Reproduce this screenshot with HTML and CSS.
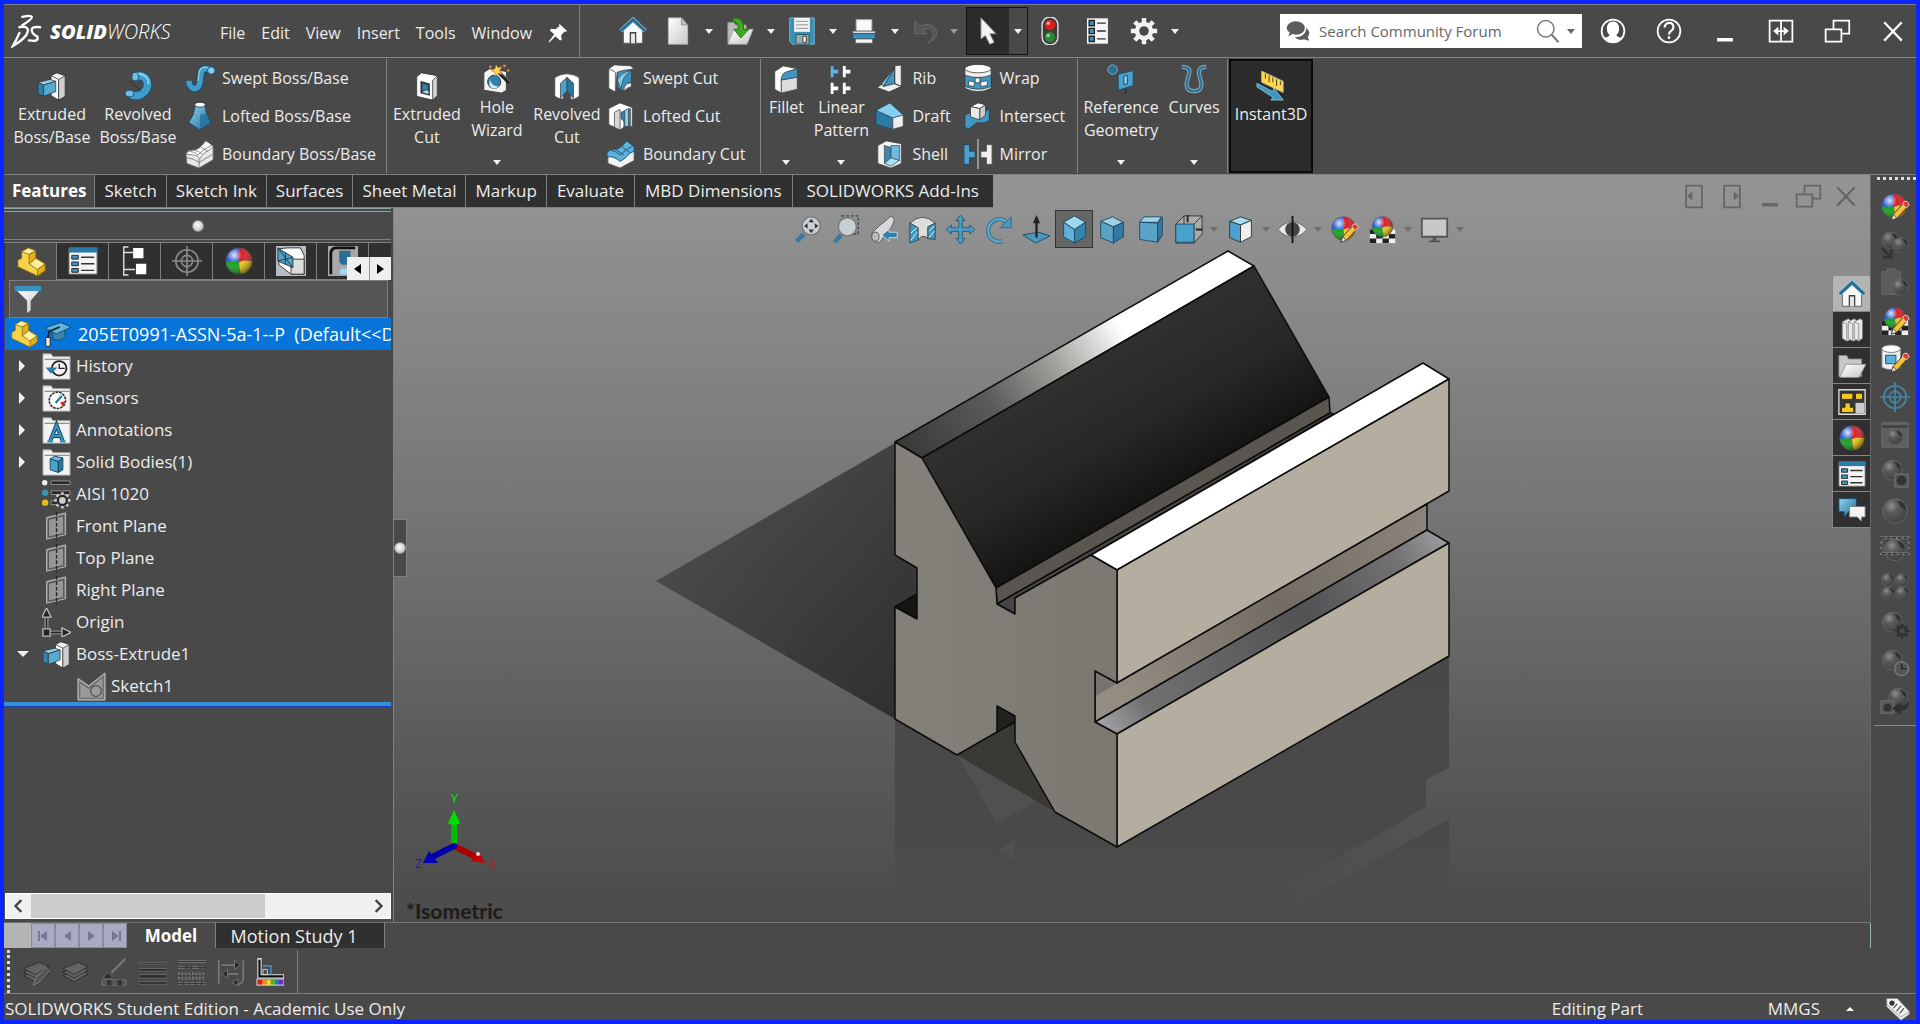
FILE: index.html
```html
<!DOCTYPE html>
<html lang="en">
<head>
<meta charset="utf-8">
<title>SOLIDWORKS - 205ET0991-ASSN-5a-1--P</title>
<link rel="stylesheet" href="styles.css">
</head>
<body>
<svg class="sprite" aria-hidden="true">
  <defs>
    <linearGradient id="gBlue" x1="0" y1="0" x2="1" y2="1"><stop offset="0" stop-color="#8fd0ee"/><stop offset="1" stop-color="#1f6c95"/></linearGradient>
    <linearGradient id="gWhite" x1="0" y1="0" x2="1" y2="1"><stop offset="0" stop-color="#fff"/><stop offset="1" stop-color="#c8c8c8"/></linearGradient>
    <radialGradient id="gShine" cx=".32" cy=".28" r=".75"><stop offset="0" stop-color="#fff" stop-opacity=".85"/><stop offset=".4" stop-color="#fff" stop-opacity="0"/><stop offset="1" stop-color="#000" stop-opacity=".45"/></radialGradient>
    <radialGradient id="gGrey" cx=".35" cy=".3" r=".75"><stop offset="0" stop-color="#909090"/><stop offset=".35" stop-color="#5c5c5c"/><stop offset="1" stop-color="#3e3e3e"/></radialGradient>
    <clipPath id="ballClip"><circle cx="16" cy="16" r="14"/></clipPath>
  </defs>
  <symbol id="ball" viewBox="0 0 32 32"><g clip-path="url(#ballClip)"><path fill="#2458d8" d="M0 0h17q-3 8-1 17L0 19z"/><path fill="#d8202a" d="M17 0h15v17q-9-3-16 0-2-9 1-17z"/><path fill="#18a020" d="M0 18q9-3 16-1 0 9 3 15H0z"/><path fill="#f0c818" d="M16 17q8-3 16 0v15H19q-3-7-3-15z"/></g><circle cx="16" cy="16" r="14" fill="url(#gShine)" stroke="#555" stroke-width=".7"/></symbol>
  <symbol id="greyball" viewBox="0 0 32 32"><circle cx="16" cy="16" r="13" fill="url(#gGrey)" stroke="#6a6a6a"/><path fill="#303030" d="M19 5q8 1 9 10-6-1-9-10z"/></symbol>
  <symbol id="pencil" viewBox="0 0 32 32"><path fill="#f4c23a" stroke="#4a3a20" d="M12 30l2-6 11-12 4 4-11 12z"/><path fill="#e03a2a" stroke="#ddd" d="M24 13l2-3q4-1 5 4l-3 3z"/><path fill="#eee" stroke="#444" d="M12 30l2-6 4 4z"/></symbol>
  <symbol id="cube" viewBox="0 0 32 32"><g stroke="#1b4a63" stroke-linejoin="round"><path fill="#9fd8f0" d="M16 1l12 7-12 8L4 8z"/><path fill="#5fb0d6" d="M4 8l12 8v15L4 24z"/><path fill="#3484ac" d="M28 8l-12 8v15l12-7z"/></g></symbol>
  <symbol id="cubedim" viewBox="0 0 32 32"><g stroke="#1b4a63" stroke-linejoin="round"><path fill="#9fd0e6" d="M3 7l13-5 12 6-11 5z"/><path fill="#5ba3c6" d="M3 7l14 6v18L3 25z"/><path fill="#34799e" d="M28 8l-11 5v18l11-7z"/></g></symbol>
  <symbol id="cubetri" viewBox="0 0 32 32"><g stroke="#1b4a63"><path fill="#9fd0e6" d="M4 8l5-6h19l-4 6z"/><path fill="#5ba3c6" d="M4 8l20 1v21L4 27z"/><path fill="#34799e" d="M24 9l5-7v20l-5 8z"/></g></symbol>
  <symbol id="extrude" viewBox="0 0 32 32"><g stroke="#333" stroke-width=".8" stroke-linejoin="round"><path fill="#f4f4f4" d="M15 5l6-3 9 3v22l-7 4-1-21z"/><path fill="#fff" d="M15 5l8 4v22l-8-5z"/><path fill="#cfcfcf" d="M23 9l7-4v22l-7 4z"/><path fill="#8ed0ee" d="M1 12l13-3 6 2-13 4z"/><path fill="#2f82ad" d="M1 12l6 3v12l-6-3z"/><path fill="#57aad2" d="M7 15l13-4v11L7 27z"/></g></symbol>
  <symbol id="revolve" viewBox="0 0 32 32"><path fill="none" stroke="#1b4f6e" stroke-width="10" d="M13 6c9-3 14 3 13 10S15 30 7 24"/><path fill="none" stroke="#3e9dca" stroke-width="8" d="M13 6c9-3 14 3 13 10S15 30 7 24"/><path fill="none" stroke="#8ed0ee" stroke-width="2" d="M13 4c9-3 15 4 14 10"/><ellipse cx="13" cy="6" rx="3.500" ry="4.500" fill="#70bfe3" stroke="#1b4f6e"/><ellipse cx="7" cy="24" rx="4.500" ry="3.500" fill="#70bfe3" stroke="#1b4f6e"/><path stroke="#222" stroke-dasharray="3 1" d="M7 11l13 11"/></symbol>
  <symbol id="sweep" viewBox="0 0 32 32"><path fill="none" stroke="#174a68" stroke-width="8" d="M4 19c1 11 11 11 12 1l1-8c1-8 6-6 11-5"/><path fill="none" stroke="#3f9cc8" stroke-width="6" d="M4 19c1 11 11 11 12 1l1-8c1-8 6-6 11-5"/><path fill="none" stroke="#86cbea" stroke-width="1.500" d="M14 19l1-9c1-6 5-6 11-5"/><circle cx="28" cy="8" r="4" fill="#80cbec" stroke="#174a68"/></symbol>
  <symbol id="loft" viewBox="0 0 32 32"><path fill="url(#gBlue)" stroke="#174a68" d="M11 4h10l2 10 5 9-12 8L4 23l5-9z"/><path fill="#1f6c95" d="M16 14h6l5 9-11 7z" opacity=".7"/><ellipse cx="16" cy="4" rx="5.500" ry="2.500" fill="#fff" stroke="#444"/></symbol>
  <symbol id="boundary" viewBox="0 0 32 32"><g stroke="#666" stroke-width=".8"><path fill="#e8e8e8" d="M1 16q3-5 8-4t13-10q2 2 8 6v14L15 31 2 26z"/><path fill="#fff" d="M1 16q4 1 8 1t7 4q3-6 6-7t8-6q-5-5-8-6-6 9-13 10-5-1-8 4z"/><path fill="none" d="M5 13q6 1 9 4 5-6 14-10M10 12q5 1 8 4M17 9q3 1 7 4M15 21v10M2 20q8 1 13 5l15-9"/></g></symbol>
  <symbol id="boundarycut" viewBox="0 0 32 32"><path fill="#f2f2f2" stroke="#555" d="M2 16l13 6 15-10v11L15 31 2 26z"/><g stroke="#174a68" stroke-width=".9"><path fill="#5bb2da" d="M1 15q3-5 8-4t13-9l8 6v5q-5 1-9 7l-6 4q-6-6-14-5z"/><path fill="none" d="M5 12q6 1 10 5 6-6 14-10M10 11l9 6M17 8l8 6"/></g></symbol>
  <symbol id="cutex" viewBox="0 0 32 32"><g stroke="#333" stroke-width=".8"><path fill="#fff" d="M5 6l5-4 17 3v21l-5 5-17-4z"/><path fill="#d2d2d2" d="M22 10l5-5v21l-5 5z"/><path fill="#2f82ad" d="M10 12l8 2v11l-8-2z" stroke-width="2"/><path fill="#a6dcf4" d="M10 23l5-3 3 1v4z"/></g></symbol>
  <symbol id="hole" viewBox="0 0 32 32"><path fill="#f4f4f4" stroke="#444" d="M2 9l6-4 18 3v20l-5 3-19-3z"/><circle cx="13" cy="19" r="7" fill="#2f82ad" stroke="#333"/><path fill="#cfeeff" d="M8 16q2 8 10 8-6 5-10-1z"/><path stroke="#222" stroke-width="4" d="M16 7l13 13"/><path stroke="#888" d="M17 6l13 13"/><path fill="#ffd84a" stroke="#d87818" stroke-width=".7" d="M15 1l2 3 4-1-2 4 2 4-4-1-3 3v-4l-4-2 4-2z"/><g fill="#f08428"><circle cx="9" cy="3" r="1.500"/><circle cx="24" cy="2" r="1.500"/><circle cx="28" cy="7" r="1.300"/></g></symbol>
  <symbol id="cutrev" viewBox="0 0 32 32"><g stroke="#444" stroke-width=".8"><path fill="#fff" d="M3 7q13-8 26 0v20q-5 4-9 3V11l-4-4-4 5v18q-5 0-9-3z"/><path fill="#4ba3cd" d="M16 7l-7 6v16l7-8z"/><path fill="#2a769f" d="M16 7l7 6v16l-7-8z"/></g></symbol>
  <symbol id="cutsweep" viewBox="0 0 32 32"><g stroke="#444" stroke-width=".8"><path fill="#f4f4f4" d="M3 6l6-4 17 1 4 3-18 4-2 21-7-4z"/><path fill="#fff" d="M3 6l7 4v21l-7-4z"/><path fill="#3a92be" d="M12 10q10-4 15-2v13q-6-2-8 9l-7-4z"/><path fill="#84ccec" d="M12 18q4-8 15-10-10 6-11 20z"/><path fill="#eee" d="M19 30q0-9 8-9v4q-4 1-8 5z"/></g></symbol>
  <symbol id="cutloft" viewBox="0 0 32 32"><g stroke="#444" stroke-width=".8"><path fill="#fff" d="M3 8l12-6 13 5v20l-9 1-4 3-12-6z"/><path fill="#d8d8d8" d="M9 12l6-3v22l-6-3z"/><path fill="#2f82ad" d="M16 12l10-4v19l-7 1q1-8-3-9z"/><path fill="#8ed0ee" d="M20 10l4-2v19h-4z"/></g></symbol>
  <symbol id="fillet" viewBox="0 0 32 32"><g stroke="#444" stroke-width=".8"><path fill="#fff" d="M4 8l9-6 15 3-12 4-5 7v15l-7-4z"/><path fill="#dcdcdc" d="M11 17l17-3v13l-17 4z"/><path fill="#3f98c4" d="M11 17q0-8 7-9l10-3v9z"/></g></symbol>
  <symbol id="linpat" viewBox="0 0 32 32"><path fill="#5db4dc" d="M5 2h3v4h5v4H8v4H5z"/><path fill="#fff" d="M18 2h3v4h5v4h-5v4h-3zM5 20h3v4h5v4H8v4H5zM18 20h3v4h5v4h-5v4h-3z"/></symbol>
  <symbol id="rib" viewBox="0 0 32 32"><g stroke="#333" stroke-width=".8"><path fill="#eee" d="M21 3l7-1v23l-7-3zM2 26l8-5 11 1 7 3-13 6z"/><path fill="#3f98c4" d="M21 5v17l-12 3z"/><path fill="#7ac5e8" d="M21 5L7 22l2 3z"/></g></symbol>
  <symbol id="draft" viewBox="0 0 32 32"><g stroke="#1b4a63" stroke-width=".8"><path fill="#2d7aa5" d="M1 10l18 8v12L1 25z"/><path fill="#86cff0" d="M1 10L16 2l14 13-11 3z"/><path fill="#eee" stroke="#555" d="M19 18l11-3v12l-11 3z"/></g></symbol>
  <symbol id="shell" viewBox="0 0 32 32"><g stroke="#444" stroke-width=".8"><path fill="#f4f4f4" d="M3 7l9-5 16 3v21l-11 5-14-5z"/><path fill="#3789b4" d="M10 7l7 2v13l-7 4z"/><path fill="#6cbbe0" d="M17 7l9 0v16l-9-2z"/><path fill="#a8def6" d="M10 26l7-6 9 3-9 6z"/></g></symbol>
  <symbol id="wrap" viewBox="0 0 32 32"><g stroke="#333" stroke-width=".8"><path fill="#f0f0f0" d="M2 6v21q14 7 28 0V6z"/><path fill="#3f98c4" d="M2 13q14 5 28 0v12q-14 6-28 0z"/><ellipse cx="16" cy="6" rx="14" ry="4.500" fill="#fff"/><path fill="#fff" d="M6 19l6 1v5l-6-1zM19 20l7-1v5l-7 1zM13 16h5v5h-5z"/></g></symbol>
  <symbol id="intersect" viewBox="0 0 32 32"><g stroke="#333" stroke-width=".8"><path fill="#3f98c4" d="M2 15q8-5 13-2t13-5v13q-7 4-13 2l-9 7-4-2z"/><path fill="#fff" d="M8 6l8-4 8 2-6 4z"/><path fill="#e8e8e8" d="M8 6l10 2v12L8 17z"/><path fill="#ccc" d="M18 8l6-4v11l-6 5z"/></g></symbol>
  <symbol id="mirror" viewBox="0 0 32 32"><path fill="#4ba3cd" stroke="#1b4a63" d="M1 6h6v7h6v7H7v7H1z"/><path fill="#f2f2f2" stroke="#555" d="M31 6h-6v7h-6v7h6v7h6z"/><path stroke="#999" stroke-width="2" d="M16 0v32"/></symbol>
  <symbol id="refgeo" viewBox="0 0 32 32"><circle cx="7" cy="6" r="5" fill="#2f6f92" stroke="#7ab8d6"/><path fill="#4ba3cd" stroke="#1b4a63" d="M13 11l16-4v16l-16 5z"/><path fill="#7ecbea" stroke="#1b4a63" d="M19 13l4-1v9l-4 1z"/><path stroke="#222" d="M21 26v6"/></symbol>
  <symbol id="curves" viewBox="0 0 32 32"><path fill="none" stroke="#8ba8b5" stroke-width="4.500" d="M3 3q9 0 8 6l-3 12q0 8 8 8t8-8L21 9q0-6 8-6"/><path fill="none" stroke="#2c7399" stroke-width="2.500" d="M3 3q9 0 8 6l-3 12q0 8 8 8t8-8L21 9q0-6 8-6"/></symbol>
  <symbol id="instant" viewBox="0 0 32 32"><path fill="#ffd948" stroke="#aaa" d="M6 0l23 11v12L6 12z"/><path stroke="#333" d="M10 3v5M14 5v7M18 7v5M22 9v7M26 11v4"/><path fill="#3f98c4" stroke="#9cc" stroke-width=".8" d="M1 13l17 9 1-4 10 13H16l2-3L1 17z"/></symbol>
  <symbol id="home" viewBox="0 0 32 32"><path fill="#f8f8f8" stroke="#555" d="M5 14L16 5l11 9v16H5z"/><path fill="none" stroke="#a8c8d8" stroke-width="5" d="M2 16L16 3l14 13"/><path fill="none" stroke="#256f97" stroke-width="3.500" d="M2 16L16 3l14 13"/><path fill="#e8e8e8" stroke="#444" stroke-width="1.500" d="M13 30V18h6v12"/></symbol>
  <symbol id="page" viewBox="0 0 32 32"><path fill="url(#gWhite)" stroke="#bbb" d="M5 1h15l7 8v22H5z"/><path fill="#c4c4c4" stroke="#888" d="M20 1v8h7z"/></symbol>
  <symbol id="open" viewBox="0 0 32 32"><path fill="#bbb" stroke="#888" d="M2 6h7l2 3h12v20H2z"/><path fill="url(#gWhite)" stroke="#aaa" d="M9 14h22l-7 17H2z"/><path fill="#3cac1c" stroke="#1c6c0c" d="M8 1q13-1 12 13h6l-9 10-8-10h5q1-8-6-9z"/></symbol>
  <symbol id="save" viewBox="0 0 32 32"><path fill="#3a8fb8" stroke="#7ab8d4" d="M2 1h28v30H5l-3-3z"/><path fill="#f2f2f2" d="M7 1h18v16H7z"/><path stroke="#888" d="M9 5h14M9 9h14M9 13h14"/><path fill="#9aa" stroke="#255" d="M9 20h15v11H9z"/><path fill="#eee" stroke="#333" d="M17 22h4v7h-4z"/></symbol>
  <symbol id="print" viewBox="0 0 32 32"><path fill="#f8f8f8" stroke="#aaa" d="M7 3h18v14H7z"/><path fill="#ddd" stroke="#555" d="M3 16h26v4H3z"/><path fill="#3a92be" stroke="#174a68" d="M3 19h26v6H3z"/><path fill="#f4f4f4" stroke="#555" d="M6 25h20v5H6z"/></symbol>
  <symbol id="undo" viewBox="0 0 32 32"><path fill="#555" stroke="#6c6c6c" d="M3 4v15h14l-5-5q11-3 12 5 0 6-6 11 12-5 10-14Q24 5 9 10z"/></symbol>
  <symbol id="arrow" viewBox="0 0 32 32"><path fill="#f4f4f4" stroke="#999" d="M8 1v24l5-4 5 10 5-2-5-10h7z"/></symbol>
  <symbol id="light" viewBox="0 0 32 32"><rect x="7" y="0" width="18" height="32" rx="9" fill="#3c3c3c" stroke="#e8e8e8" stroke-width="1.500"/><circle cx="16" cy="9" r="6" fill="#d8201c"/><circle cx="16" cy="23" r="6" fill="#2c8838"/><circle cx="14" cy="7" r="2" fill="#ffa0a0"/><circle cx="14" cy="21" r="2" fill="#98d8a0"/></symbol>
  <symbol id="options" viewBox="0 0 32 32"><path fill="#f6f6f6" stroke="#444" d="M4 1h25v30H4z"/><g fill="#3a92be" stroke="#222" stroke-width="1.500"><path d="M7 4h6v6H7zM7 13h6v6H7zM7 22h6v6H7z"/></g><path stroke="#333" stroke-width="1.500" d="M16 7h10M16 16h10M16 25h10"/></symbol>
  <symbol id="gear" viewBox="0 0 32 32"><circle cx="16" cy="16" r="8" fill="none" stroke="currentColor" stroke-width="5"/><path stroke="currentColor" stroke-width="5" d="M16 1v6M16 25v6M1 16h6M25 16h6M5.400 5.400l4.200 4.200M22.400 22.400l4.200 4.200M5.400 26.600l4.200-4.200M22.400 9.600l4.200-4.200"/></symbol>
  <symbol id="part" viewBox="0 0 32 32"><g stroke="#8a6a10" stroke-width=".9" stroke-linejoin="round"><path fill="#f6d24a" d="M2 14l4-2V5l7-4 8 3v8l10 6v7l-8 6L2 21z"/><path fill="#fff0a0" d="M6 5l7-4 8 3-7 4zM14 18l7-6 10 6-8 6z"/><path fill="#e2b020" d="M14 8l7-4v8l-7 6zM23 24l8-6v7l-8 6z"/></g></symbol>
  <symbol id="props" viewBox="0 0 32 32"><path fill="#f4f4f4" stroke="#666" d="M1 2h30v28H1z"/><path fill="#2a7ba8" d="M1 2h30v5H1z"/><g fill="#3a92be" stroke="#222"><path d="M4 10h7v4H4zM4 17h7v4H4zM4 24h7v4H4z"/></g><path stroke="#333" stroke-width="1.500" d="M14 12h14M14 19h14M14 26h14"/></symbol>
  <symbol id="config" viewBox="0 0 32 32"><path fill="none" stroke="#ddd" stroke-width="1.500" d="M9 1H4v30h5M4 7h10M4 25h12"/><path fill="#fff" d="M14 2h11v11H14zM17 19h11v11H17z"/></symbol>
  <symbol id="target" viewBox="0 0 32 32"><g fill="none" stroke="currentColor" stroke-width="1.800"><circle cx="16" cy="16" r="12"/><circle cx="16" cy="16" r="6"/><path d="M16 0v32M0 16h32"/></g></symbol>
  <symbol id="section" viewBox="0 0 32 32"><path fill="#b8bcc4" d="M0 0h32v32H0z"/><g stroke="#333"><path fill="#fff" d="M12 2h14l4 8v20H16L3 20V3z"/><path fill="#ddd" d="M16 14h14v16H16z"/><path fill="#4ba3cd" d="M2 2l16 10v11L2 16z"/><path d="M2 2l16 21M2 16l16-4M10 7v13"/></g></symbol>
  <symbol id="die" viewBox="0 0 32 32"><path fill="#a8a8a8" d="M0 0h32v32H0z"/><path fill="none" stroke="#111" stroke-width="3" d="M29 2H8q-5 1-5 6v22"/><path fill="#2a6e94" d="M12 5h12v9h-4l4 6h-9l-3-3z"/><path fill="#9cdcf6" d="M14 24h18v6H12z"/></symbol>
  <symbol id="filter" viewBox="0 0 32 32"><path fill="url(#gWhite)" d="M2 5h28L19 18v11l-4 3V18z"/><path fill="#3a92be" d="M1 1h30v6H1z"/></symbol>
  <symbol id="cap" viewBox="0 0 32 32"><g stroke="#154058" stroke-width=".9"><path fill="#3a86ae" d="M10 13v9q9 3 14-3v-8z"/><path fill="#62b6de" d="M1 9l18-6 12 5-17 8z"/></g><path fill="none" stroke="#222" stroke-width="2" d="M18 8L6 13l-2 9"/><path fill="#f0ead8" stroke="#222" d="M2 20h5v10H2z"/></symbol>
  <symbol id="folder" viewBox="0 0 32 32"><path fill="#f2f2f2" stroke="#999" d="M1 2h9l2 3h19v25H1z"/><path stroke="#666" d="M3 8h27"/></symbol>
  <symbol id="history" viewBox="0 0 32 32"><use href="#folder"/><circle cx="19" cy="18" r="8" fill="none" stroke="#222" stroke-width="2"/><path fill="none" stroke="#222" stroke-width="1.500" d="M19 13v5h6"/><path fill="#2a7ba8" d="M4 17h13l-7 7z"/></symbol>
  <symbol id="sensor" viewBox="0 0 32 32"><use href="#folder"/><circle cx="17" cy="18" r="9" fill="#fff" stroke="#333" stroke-width="1.800" stroke-dasharray="3 1"/><path stroke="#2a7ba8" stroke-width="2.500" d="M15 21l7-8"/><path fill="#d82820" d="M20 20l6-1-3 6z"/></symbol>
  <symbol id="annot" viewBox="0 0 32 32"><use href="#folder"/><path fill="none" stroke="#123f58" stroke-width="4.500" d="M9 28l7-18 7 18M12 22h9"/><path fill="none" stroke="#3a92be" stroke-width="2.500" d="M9 28l7-18 7 18M12 22h9M6 28h6M20 28h6"/></symbol>
  <symbol id="bodies" viewBox="0 0 32 32"><use href="#folder"/><g stroke="#123f58"><path fill="#6cbbe0" d="M9 12l5-3 9 2-5 4z"/><path fill="#4ba3cd" d="M9 12l9 3v12l-9-3z"/><path fill="#2a769f" d="M18 15l5-4v13l-5 3z"/></g></symbol>
  <symbol id="material" viewBox="0 0 32 32"><g stroke="#999" fill="#282828"><path d="M10 1h21v4H10zM10 12h21v4H10zM10 23h8v4h-8z"/></g><circle cx="3" cy="3" r="3" fill="#eee"/><circle cx="3.500" cy="14" r="3.500" fill="#3a92be"/><circle cx="3.500" cy="25" r="3.500" fill="#e8b818"/><g color="#ccc"><use href="#gear" x="13" y="13" width="19" height="19"/></g><circle cx="22.500" cy="22.500" r="5" fill="#ccc" stroke="#222" stroke-width="2.500"/></symbol>
  <symbol id="plane" viewBox="0 0 32 32"><path fill="#969696" stroke="#b8b8b8" d="M5 6l21-5v24L5 30z"/><path fill="none" stroke="#555" stroke-width="1.500" d="M7 8l17-4v20L7 28z"/><path stroke="#222" stroke-width="1.500" stroke-dasharray="4 2" d="M16 0v32"/></symbol>
  <symbol id="origin" viewBox="0 0 32 32"><path fill="none" stroke="#bbb" stroke-width="4" d="M5 8v19h19"/><path fill="none" stroke="#222" stroke-width="2" d="M5 8v19h19"/><path fill="#222" stroke="#bbb" stroke-width="1.500" d="M5 0l5 10H0zM32 27l-10 5V22zM1 23h8v8H1z"/></symbol>
  <symbol id="sketch" viewBox="0 0 32 32"><path fill="#9a9a9a" stroke="#bbb" d="M1 7l12 8L31 1v30H1z"/><path fill="none" stroke="#666" stroke-width="1.300" d="M3 11l10 7L29 5v24H3z"/><circle cx="21" cy="21" r="6" fill="#9a9a9a" stroke="#555" stroke-width="1.500"/></symbol>
  <symbol id="zoomfit" viewBox="0 0 32 32"><path stroke="#3a7a9c" stroke-width="5" d="M3 29l8-8"/><circle cx="19" cy="12" r="10" fill="#c8d0d4" stroke="#777" stroke-width="1.500"/><path fill="#333" d="M19 4l3 4h-6zM19 20l3-4h-6zM11 12l4-3v6zM27 12l-4-3v6z"/></symbol>
  <symbol id="zoomarea" viewBox="0 0 32 32"><path fill="none" stroke="#444" stroke-width="1.500" stroke-dasharray="3 2" d="M11 1h18v20H11z"/><path stroke="#3a7a9c" stroke-width="5" d="M3 30l7-8"/><circle cx="17" cy="13" r="10" fill="#c8d0d4" stroke="#777" stroke-width="1.500"/></symbol>
  <symbol id="prev" viewBox="0 0 32 32"><path fill="#d8d8d8" stroke="#555" d="M2 20l8-8 9-7 4-4 4 4-3 8-7 8-6 9q-9 2-9-10z"/><ellipse cx="6" cy="24" rx="4" ry="5" fill="#bbb" stroke="#555"/><path fill="#2f82ad" stroke="#cde" d="M13 22l8-6v3h9v6h-9v4z"/></symbol>
  <symbol id="secview" viewBox="0 0 32 32"><g stroke="#444"><path fill="#ddd" d="M2 9q14-13 28 0l-8 4v13q-6-6-11 2V14z"/><path fill="#3f98c4" d="M2 9l9 5v14l-9 3zM30 9l-8 4v13l8 1z"/><path stroke="#dff" d="M3 20l7-6M3 28l7-9M23 18l6-6M23 25l6-7"/></g></symbol>
  <symbol id="pan" viewBox="0 0 32 32"><path fill="#4a9cc4" stroke="#1b4a63" stroke-width=".8" d="M16 0l5 6h-3v8h8v-3l6 5-6 5v-3h-8v8h3l-5 6-5-6h3v-8H6v3l-6-5 6-5v3h8V6h-3z"/></symbol>
  <symbol id="rotate" viewBox="0 0 32 32"><path fill="none" stroke="#2c6c8c" stroke-width="4.500" d="M20 29C4 33-2 10 14 5q6-2 11 3"/><path fill="none" stroke="#62a8ca" stroke-width="2.500" d="M20 29C4 33-2 10 14 5q6-2 11 3"/><path fill="#4a98be" stroke="#2c6c8c" d="M30 2v12H18z"/></symbol>
  <symbol id="normal" viewBox="0 0 32 32"><path fill="#4a98be" stroke="#1b4a63" d="M1 22l17-3 13 4-16 8z"/><path stroke="#222" stroke-width="2.500" d="M16 6v19"/><path fill="#222" d="M16 0l4 9h-8z"/></symbol>
  <symbol id="orient" viewBox="0 0 32 32"><path fill="#aaa" stroke="#333" d="M2 10L11 1h20v20l-9 10H2z"/><path fill="none" stroke="#333" d="M11 1v9M22 10l9-9M22 31V10"/><path fill="#4ba3cd" stroke="#1b4a63" d="M2 10h20v20H2z"/><path stroke="#222" stroke-width="2" d="M15 0v8M31 16h-7"/></symbol>
  <symbol id="display" viewBox="0 0 32 32"><g stroke="#333"><path fill="#a6dcf4" d="M4 7l12-5 12 4-12 5z"/><path fill="#4ba3cd" d="M4 7l12 4v19L4 25z"/><path fill="#eee" d="M16 11l12-5v18l-12 6z"/></g></symbol>
  <symbol id="eye" viewBox="0 0 32 32"><path fill="#e8e8e8" stroke="#666" d="M0 16Q16-1 32 16 16 33 0 16z"/><circle cx="16" cy="16" r="8" fill="#444"/><path stroke="#111" stroke-width="2" d="M16 1v30"/></symbol>
  <symbol id="appear" viewBox="0 0 32 32"><use href="#ball" width="30" height="30"/><use href="#pencil"/></symbol>
  <symbol id="checker" viewBox="0 0 32 32"><path fill="#eee" d="M2 16h28v15H2z"/><path fill="#222" d="M2 16h7v5H2zM16 16h7v5h-7zM9 21h7v5H9zM23 21h7v5h-7zM2 26h7v5H2zM16 26h7v5h-7z"/><use href="#ball" x="3" y="0" width="26" height="26"/></symbol>
  <symbol id="scene" viewBox="0 0 32 32"><use href="#checker"/><use href="#pencil"/></symbol>
  <symbol id="monitor" viewBox="0 0 32 32"><path fill="#c8c8c8" stroke="#555" stroke-width="2" d="M2 4h28v20H2z"/><path fill="#555" d="M14 24h4v4h4v2H10v-2h4z"/></symbol>
  <symbol id="books" viewBox="0 0 32 32"><g fill="#e8e8e8" stroke="#777"><path d="M3 5l8-4 3 2v26l-5 2-6-4z"/><path d="M11 5l8-4 3 2v26l-5 2-6-4z"/><path d="M19 5l8-4 3 2v24l-5 4-6-4z"/><path fill="none" d="M3 5l6 3v23M11 5l6 3v23M19 5l6 3v23"/></g></symbol>
  <symbol id="folderopen" viewBox="0 0 32 32"><path fill="#c8c8c8" stroke="#888" d="M1 4h9l2 4h15v20H1z"/><path fill="url(#gWhite)" stroke="#888" d="M9 14h23l-8 15H2z"/></symbol>
  <symbol id="palette" viewBox="0 0 32 32"><path fill="#383838" stroke="#ddd" stroke-width="1.500" d="M1 2h30v28H1z"/><path fill="#f4c820" stroke="#222" d="M4 6h13v7H4zM20 6h8v7h-8zM8 17h6v5h4v6H4v-6h4z"/><path fill="#ccc" d="M20 17h10v12H20z"/></symbol>
  <symbol id="chat" viewBox="0 0 32 32"><path fill="url(#gBlue)" stroke="#174a68" d="M1 3h20v15h-9l-5 6v-6H1z"/><path fill="#f4f4f4" stroke="#777" d="M13 12h18v12h-4v5l-5-5h-9z"/></symbol>
  <symbol id="barrel" viewBox="0 0 32 32"><path fill="#eee" stroke="#777" d="M2 5v20q10 5 20 0V5z"/><ellipse cx="12" cy="5" rx="10" ry="4" fill="#fff" stroke="#777"/><path fill="#5bb2da" stroke="#1b4a63" d="M6 12h11v9H6z"/><use href="#pencil"/></symbol>
  <symbol id="gcopy" viewBox="0 0 32 32"><use href="#greyball" width="22" height="22"/><use href="#greyball" x="12" y="6" width="20" height="20"/><path fill="none" stroke="#333" stroke-width="3" d="M2 19l9 9m1-8v9H3"/></symbol>
  <symbol id="gpaste" viewBox="0 0 32 32"><path fill="#5c5c5c" stroke="#6c6c6c" d="M2 4h6V1h9v3h5v24H2z"/><use href="#greyball" x="11" y="10" width="21" height="21"/></symbol>
  <symbol id="gwin" viewBox="0 0 32 32"><path fill="#5e5e5e" stroke="#707070" d="M2 3h28v26H2z"/><path stroke="#3a3a3a" stroke-width="2" d="M2 7h28"/><use href="#greyball" x="6" y="8" width="20" height="20"/></symbol>
  <symbol id="gwin2" viewBox="0 0 32 32"><use href="#greyball" width="26" height="26"/><path fill="#555" stroke="#777" d="M16 17h14v14H16z"/><circle cx="23" cy="24" r="5" fill="#333"/></symbol>
  <symbol id="gregion" viewBox="0 0 32 32"><use href="#greyball" x="2" y="3" width="28" height="28"/><path fill="none" stroke="#777" stroke-width="3" d="M1 4h30v17H1z"/><path fill="none" stroke="#333" stroke-width="1.500" stroke-dasharray="4 2" d="M1 4h30v17H1z"/></symbol>
  <symbol id="gfour" viewBox="0 0 32 32"><use href="#greyball" width="17" height="17"/><use href="#greyball" x="15" width="17" height="17"/><use href="#greyball" y="14" width="18" height="18"/><use href="#greyball" x="15" y="14" width="18" height="18"/></symbol>
  <symbol id="ggear" viewBox="0 0 32 32"><use href="#greyball" width="26" height="26"/><g color="#303030"><use href="#gear" x="15" y="14" width="17" height="17"/></g></symbol>
  <symbol id="gclock" viewBox="0 0 32 32"><use href="#greyball" width="26" height="26"/><circle cx="23" cy="22" r="7.500" fill="#555" stroke="#777" stroke-width="1.500"/><path fill="none" stroke="#222" stroke-width="1.500" d="M23 17v5h5"/></symbol>
  <symbol id="grecall" viewBox="0 0 32 32"><use href="#greyball" x="7" width="25" height="25"/><path fill="#555" stroke="#777" d="M1 16h14v13H1z"/><circle cx="8" cy="23" r="4" fill="#333"/><path fill="#303030" d="M13 24l9-7v4q6 0 9-6 0 11-9 12v4z"/></symbol>
  <symbol id="stack" viewBox="0 0 32 32"><g fill="#636363" stroke="#2c2c2c"><path d="M2 20l18-7 11 5-16 9z"/><path d="M2 16l18-7 11 5-16 9z"/><path d="M2 12l18-7 11 5-16 9z"/></g></symbol>
  <symbol id="stackpen" viewBox="0 0 32 32"><use href="#stack"/><path fill="#555" stroke="#888" d="M13 31l2-7 12-13 4 4-12 13z"/></symbol>
  <symbol id="brush" viewBox="0 0 32 32"><path stroke="#777" stroke-width="2.500" d="M29 1L13 17"/><path fill="#2c2c2c" stroke="#666" d="M3 22q4-1 5-6l6 5q-3 5-11 1z"/><path fill="#555" stroke="#777" d="M2 25h28v6H2z"/><path fill="#333" d="M8 25h5v6H8zM20 25h5v6h-5z"/></symbol>
  <symbol id="lines" viewBox="0 0 32 32"><g fill="#2c2c2c" stroke="#777" stroke-width=".8"><path d="M0 5h32v2H0zM0 12h32v3H0zM0 19h32v4H0zM0 27h32v3H0z"/></g></symbol>
  <symbol id="linestyle" viewBox="0 0 32 32"><g stroke="#7a7a7a" stroke-width="3"><path d="M0 4h32"/><path stroke-dasharray="8 3 2 3" d="M0 11h32"/><path stroke-dasharray="2 2" d="M0 18h32M0 23h32"/><path stroke-dasharray="5 2" d="M0 29h32"/></g><g stroke="#2c2c2c"><path d="M0 4h32M0 11h32M0 29h32"/></g></symbol>
  <symbol id="swap" viewBox="0 0 32 32"><path fill="none" stroke="#777" stroke-width="2" d="M2 2v28M30 2v22q-1 7-8 6M5 8h20M6 18h18"/><path fill="#2c2c2c" stroke="#777" d="M27 8l-7-5v10zM5 18l7-5v10zM17 28l7-4v8z"/></symbol>
  <symbol id="colorbar" viewBox="0 0 32 32"><path fill="none" stroke="#ddd" stroke-width="5" d="M4 0v21h28"/><path fill="none" stroke="#111" stroke-width="2.500" d="M4 2v19h27"/><path fill="none" stroke="#3a92be" stroke-width="2" d="M8 9h9v10"/><path fill="none" stroke="#ddd" d="M8 13h5v6H8z"/><path fill="#e41c1c" d="M2 25h5v6H2z"/><path fill="#f08a10" d="M7 25h5v6H7z"/><path fill="#e8d820" d="M12 25h5v6h-5z"/><path fill="#58b030" d="M17 25h5v6h-5z"/><path fill="#2880c0" d="M22 25h4v6h-4z"/><path fill="#7828c8" d="M26 25h5v6h-5z"/><path fill="none" stroke="#eee" d="M1 24h31v7H1z"/></symbol>
  <symbol id="tag" viewBox="0 0 32 32"><path fill="#f2f2f2" stroke="#888" d="M1 2l14 0 16 17v4L20 31 1 13z"/><path fill="none" stroke="#888" d="M31 19l-11 8L1 10"/><circle cx="8" cy="8" r="3.500" fill="#333"/><path stroke="#333" stroke-width="1.500" d="M15 9l-5 6M20 12l-6 7M24 15l-6 7"/></symbol>
  <symbol id="pin" viewBox="0 0 32 32"><path fill="#fff" d="M18 1l13 12-5 1-5 6 1 7-3 1-7-7L2 31l-1-1 9-12-7-6 2-3 7 1 6-5z"/></symbol>
  <symbol id="talk" viewBox="0 0 32 32"><path fill="#5c5c5c" d="M13 3c7 0 12 4 12 9s-5 9-12 9l-4-1-6 3 2-5C-4 12 4 3 13 3z"/><path fill="#5c5c5c" d="M27 12c5 4 5 9 2 12l2 5-7-2c-5 2-10 0-12-3 8 1 15-4 15-12z"/></symbol>
  <symbol id="magnify" viewBox="0 0 32 32"><circle cx="13" cy="13" r="11" fill="none" stroke="#777" stroke-width="2"/><path stroke="#777" stroke-width="2.500" d="M21 21l9 10"/></symbol>
  <symbol id="user" viewBox="0 0 32 32"><circle cx="16" cy="16" r="13" fill="none" stroke="#fff" stroke-width="2"/><path fill="#fff" d="M16 5c5 0 7 4 7 8 0 3-1 6-3 7 0 3 4 3 6 4-5 6-15 6-20 0 2-1 6-1 6-4-2-1-3-4-3-7 0-4 2-8 7-8z"/></symbol>
  <symbol id="ring" viewBox="0 0 32 32"><circle cx="16" cy="16" r="13" fill="none" stroke="#fff" stroke-width="2"/><path fill="none" stroke="#fff" stroke-width="2.500" d="M11 12c0-7 11-7 10 0 0 4-5 3-5 8M16 22v3"/></symbol>
  <symbol id="min" viewBox="0 0 32 32"><path fill="currentColor" d="M7 24h18v4H7z"/></symbol>
  <symbol id="split" viewBox="0 0 32 32"><path fill="none" stroke="#fff" stroke-width="2" d="M3 4h26v24H3zM16 4v24"/><path fill="#fff" d="M7 16l6-5v4h6v-4l6 5-6 5v-4h-6v4z"/></symbol>
  <symbol id="restore" viewBox="0 0 32 32"><path fill="none" stroke="currentColor" stroke-width="2" d="M3 14h18v14H3zM12 14V4h18v15h-9"/></symbol>
  <symbol id="close" viewBox="0 0 32 32"><path stroke="currentColor" stroke-width="2.500" d="M6 6l20 21M26 6L6 27"/></symbol>
  <symbol id="dockl" viewBox="0 0 32 32"><path fill="none" stroke="currentColor" stroke-width="2" d="M7 4h18v25H7z"/><path fill="currentColor" d="M8 16l6-5v10z"/></symbol>
  <symbol id="dockr" viewBox="0 0 32 32"><path fill="none" stroke="currentColor" stroke-width="2" d="M7 4h18v25H7z"/><path fill="currentColor" d="M24 16l-6-5v10z"/></symbol>
</svg>

<div class="app">
  <header class="titlebar">
    <div class="brand">
      <svg class="ds" viewBox="0 0 32 36" aria-hidden="true"><g fill="none" stroke="#fff" stroke-width="2.500" stroke-linecap="round"><path d="M11 3q9-2 10 0t-10 9"/><path d="M8 14q9-2 9 4-1 7-16 16 4-7 7-14"/><path d="M30 14q-9-1-9 3t6 7q2 6-9 4"/></g></svg>
      <span class="wordmark"><b>SOLID</b>WORKS</span>
    </div>
    <nav class="menu">
      <button>File</button><button>Edit</button><button>View</button><button>Insert</button><button>Tools</button><button>Window</button>
      <button aria-label="Pin menu"><svg class="i20"><use href="#pin"/></svg></button>
    </nav>
    <div class="quick">
      <button class="qb first" aria-label="Home"><svg><use href="#home"/></svg></button>
      <button class="qb" aria-label="New"><svg><use href="#page"/></svg></button><button class="dd" aria-label="New options"></button>
      <button class="qb" aria-label="Open"><svg><use href="#open"/></svg></button><button class="dd" aria-label="Open options"></button>
      <button class="qb" aria-label="Save"><svg><use href="#save"/></svg></button><button class="dd" aria-label="Save options"></button>
      <button class="qb" aria-label="Print"><svg><use href="#print"/></svg></button><button class="dd" aria-label="Print options"></button>
      <button class="qb" aria-label="Undo"><svg><use href="#undo"/></svg></button><button class="dd dim" aria-label="Undo options"></button>
      <div class="selectbox"><button class="selected" aria-label="Select"><svg><use href="#arrow"/></svg></button><button class="dd" aria-label="Select options"></button></div>
      <button class="qb" aria-label="Rebuild"><svg><use href="#light"/></svg></button>
      <button class="qb spaced" aria-label="File properties"><svg><use href="#options"/></svg></button>
      <button class="qb spaced white" aria-label="Options"><svg><use href="#gear"/></svg></button><button class="dd" aria-label="More options"></button>
    </div>
    <form class="search">
      <svg class="i24"><use href="#talk"/></svg>
      <input type="text" placeholder="Search Community Forum" aria-label="Search Community Forum">
      <button type="button" aria-label="Search"><svg class="i24"><use href="#magnify"/></svg></button>
      <button type="button" class="dd dark" aria-label="Search scope"></button>
    </form>
    <div class="wincontrols">
      <button aria-label="Account"><svg><use href="#user"/></svg></button>
      <button aria-label="Help"><svg><use href="#ring"/></svg></button>
      <button aria-label="Minimize"><svg><use href="#min"/></svg></button>
      <button aria-label="Span displays"><svg><use href="#split"/></svg></button>
      <button aria-label="Restore"><svg><use href="#restore"/></svg></button>
      <button aria-label="Close"><svg><use href="#close"/></svg></button>
    </div>
  </header>

  <div class="ribbon">
    <div class="group">
      <button class="big wide"><svg><use href="#extrude"/></svg><span>Extruded<br>Boss/Base</span></button>
      <button class="big wide"><svg><use href="#revolve"/></svg><span>Revolved<br>Boss/Base</span></button>
      <div class="col">
        <button><svg><use href="#sweep"/></svg>Swept Boss/Base</button>
        <button><svg><use href="#loft"/></svg>Lofted Boss/Base</button>
        <button><svg><use href="#boundary"/></svg>Boundary Boss/Base</button>
      </div>
    </div>
    <div class="group roomy">
      <button class="big"><svg><use href="#cutex"/></svg><span>Extruded<br>Cut</span></button>
      <button class="big more"><svg><use href="#hole"/></svg><span>Hole<br>Wizard</span><i class="caret"></i></button>
      <button class="big"><svg><use href="#cutrev"/></svg><span>Revolved<br>Cut</span></button>
      <div class="col">
        <button><svg><use href="#cutsweep"/></svg>Swept Cut</button>
        <button><svg><use href="#cutloft"/></svg>Lofted Cut</button>
        <button><svg><use href="#boundarycut"/></svg>Boundary Cut</button>
      </div>
    </div>
    <div class="group tight">
      <button class="big more narrow"><svg><use href="#fillet"/></svg><span>Fillet</span><i class="caret"></i></button>
      <button class="big more mid"><svg><use href="#linpat"/></svg><span>Linear<br>Pattern</span><i class="caret"></i></button>
      <div class="col">
        <button><svg><use href="#rib"/></svg>Rib</button>
        <button><svg><use href="#draft"/></svg>Draft</button>
        <button><svg><use href="#shell"/></svg>Shell</button>
      </div>
      <div class="col">
        <button><svg><use href="#wrap"/></svg>Wrap</button>
        <button><svg><use href="#intersect"/></svg>Intersect</button>
        <button><svg><use href="#mirror"/></svg>Mirror</button>
      </div>
    </div>
    <div class="group bare">
      <button class="big more wide"><svg><use href="#refgeo"/></svg><span>Reference<br>Geometry</span><i class="caret"></i></button>
      <button class="big more mid"><svg><use href="#curves"/></svg><span>Curves</span><i class="caret"></i></button>
    </div>
    <button class="big instant"><svg><use href="#instant"/></svg><span>Instant3D</span></button>
  </div>

  <main class="work">
    <nav class="tabs">
      <button class="active">Features</button><button>Sketch</button><button>Sketch Ink</button><button>Surfaces</button><button>Sheet Metal</button><button>Markup</button><button>Evaluate</button><button>MBD Dimensions</button><button>SOLIDWORKS Add-Ins</button>
    </nav>

    <aside class="panel">
      <div class="grab"><i class="knob"></i></div>
      <div class="ptabs">
        <button class="active" aria-label="Feature tree"><svg><use href="#part"/></svg></button>
        <button aria-label="Property manager"><svg><use href="#props"/></svg></button>
        <button aria-label="Configurations"><svg><use href="#config"/></svg></button>
        <button class="ash" aria-label="Dimensions"><svg><use href="#target"/></svg></button>
        <button aria-label="Display manager"><svg><use href="#ball"/></svg></button>
        <button aria-label="Section"><svg><use href="#section"/></svg></button>
        <button aria-label="Tooling"><svg><use href="#die"/></svg></button>
        <div class="pscroll"><button aria-label="Previous tabs"><i class="tri left"></i></button><button aria-label="Next tabs"><i class="tri"></i></button></div>
      </div>
      <div class="pfilter"><svg><use href="#filter"/></svg></div>
      <div class="root"><svg><use href="#part"/></svg><svg><use href="#cap"/></svg><span>205ET0991-ASSN-5a-1--P&nbsp; (Default&lt;&lt;D</span></div>
      <ul class="tree">
        <li><button class="tw" aria-label="Expand History"></button><svg><use href="#history"/></svg>History</li>
        <li><button class="tw" aria-label="Expand Sensors"></button><svg><use href="#sensor"/></svg>Sensors</li>
        <li><button class="tw" aria-label="Expand Annotations"></button><svg><use href="#annot"/></svg>Annotations</li>
        <li><button class="tw" aria-label="Expand Solid Bodies"></button><svg><use href="#bodies"/></svg>Solid Bodies(1)</li>
        <li class="leaf"><svg><use href="#material"/></svg>AISI 1020</li>
        <li class="leaf"><svg><use href="#plane"/></svg>Front Plane</li>
        <li class="leaf"><svg><use href="#plane"/></svg>Top Plane</li>
        <li class="leaf"><svg><use href="#plane"/></svg>Right Plane</li>
        <li class="leaf"><svg><use href="#origin"/></svg>Origin</li>
        <li><button class="tw open" aria-label="Collapse Boss-Extrude1"></button><svg><use href="#extrude"/></svg>Boss-Extrude1</li>
        <li class="leaf child"><svg><use href="#sketch"/></svg>Sketch1</li>
      </ul>
      <div class="rollback"></div>
      <div class="hscroll"><button aria-label="Scroll left"><svg viewBox="0 0 12 12"><path d="M8 1L3 6l5 5"/></svg></button><div class="track"><div class="thumb"></div></div><button aria-label="Scroll right"><svg viewBox="0 0 12 12"><path d="M4 1l5 5-5 5"/></svg></button></div>
    </aside>

    <section class="viewport">
      <svg class="model" viewBox="394 175 1476 747" preserveAspectRatio="xMidYMid slice" role="img" aria-label="V-block part, isometric view">
        <defs>
          <linearGradient id="shadow" gradientUnits="userSpaceOnUse" x1="700" y1="520" x2="900" y2="700"><stop offset="0" stop-color="#4a4a4a"/><stop offset="1" stop-color="#303030"/></linearGradient>
          <linearGradient id="topface" gradientUnits="userSpaceOnUse" x1="908" y1="450" x2="1240" y2="258"><stop offset="0" stop-color="#3a3a39"/><stop offset=".25" stop-color="#5c5b5a"/><stop offset=".45" stop-color="#a5a39f"/><stop offset=".64" stop-color="#fff"/></linearGradient>
          <linearGradient id="slope" gradientUnits="userSpaceOnUse" x1="1085" y1="360" x2="1165" y2="500"><stop offset="0" stop-color="#30302f"/><stop offset=".5" stop-color="#292827"/><stop offset="1" stop-color="#131211"/></linearGradient>
          <linearGradient id="wall" gradientUnits="userSpaceOnUse" x1="1116" y1="690" x2="1430" y2="510"><stop offset="0" stop-color="#958d82"/><stop offset=".5" stop-color="#736c64"/><stop offset="1" stop-color="#8d857a"/></linearGradient>
          <linearGradient id="floor" gradientUnits="userSpaceOnUse" x1="1105" y1="728" x2="1438" y2="536"><stop offset="0" stop-color="#a0a0a2"/><stop offset=".12" stop-color="#717173"/><stop offset=".6" stop-color="#525254"/><stop offset=".88" stop-color="#737375"/><stop offset="1" stop-color="#98989a"/></linearGradient>
          <linearGradient id="front" gradientUnits="userSpaceOnUse" x1="895" y1="600" x2="1116" y2="600"><stop offset="0" stop-color="#84817a"/><stop offset="1" stop-color="#7b7871"/></linearGradient>
          <linearGradient id="reflect" x1="0" y1="0" x2="0" y2="1"><stop offset="0" stop-color="#484848"/><stop offset=".7" stop-color="#484848" stop-opacity=".9"/><stop offset="1" stop-color="#4a4a4a" stop-opacity="0"/></linearGradient>
          <linearGradient id="gleam" x1="1" y1="0" x2="0" y2="1"><stop offset="0" stop-color="#5c5b58" stop-opacity=".7"/><stop offset="1" stop-color="#555" stop-opacity="0"/></linearGradient>
        </defs>
        <path fill="url(#shadow)" d="M656 581L895 443h50v276h-50z"/>
        <path fill="url(#reflect)" d="M895 719l62 36 98 57 62 35 332-191v112l-23 12v27l23 12v100H895z"/>
        <path fill="#505050" d="M957 755l83 45-43 23zM997 850l18-10v20z"/>
        <path fill="url(#gleam)" d="M1426 807l23 12-160 90h-40z"/>
        <g stroke="#0c0c0c" stroke-width="1.500" stroke-linejoin="round">
          <path fill="#151514" d="M895 607l22-13v25z"/>
          <path fill="#3b3936" stroke="none" d="M957 755l58-33v20l40 70z"/>
          <path fill="#222321" d="M997 706l18 10v6l-18 10z"/>
          <path fill="url(#topface)" d="M1228 251l26 15-332 192-27-16z"/>
          <path fill="url(#slope)" d="M1254 266l75 131-333 191-74-130z"/>
          <path fill="#5a554f" d="M996 588l333-191 1 16-333 191z"/>
          <path fill="#464544" d="M997 604l333-191 4 1-243 141-76 43v16z"/>
          <path fill="#fff" d="M1423 363l26 16-332 191-26-15z"/>
          <path fill="#b5ada0" d="M1117 570l332-191v112l-332 192z"/>
          <path fill="url(#wall)" d="M1095 671l22 12 310-179v26l-332 192z"/>
          <path fill="#77736d" stroke="none" d="M1096 672l20 12-20 12z"/>
          <path fill="url(#floor)" d="M1095 722l332-192 22 13-332 191z"/>
          <path fill="#b5ada0" d="M1117 734l332-191v113l-332 191z"/>
          <path fill="url(#front)" d="M895 442l27 16 74 130 1 16 18 10v-16l76-43 26 15v113l-22-12v51l22 12v113l-62-35-40-70v-26l-18-10v26l-40 23-62-36V607l22 12v-51l-22-13z"/>
        </g>
        <g class="triad">
          <path stroke="#0b0" stroke-width="6" d="M454 846v-26"/><path fill="#0d0" d="M454 810l6 13q-6 4-12 0z"/>
          <path stroke="#00a" stroke-width="6" d="M454 846l-22 11"/><path fill="#0000b4" d="M423 863l6-12 9 12z"/>
          <path stroke="#a00" stroke-width="6" d="M454 846l22 11"/><path fill="#c80000" d="M485 863l-6-11-8 9z"/><circle cx="478" cy="854" r="2" fill="#fcc"/>
          <circle cx="454" cy="846" r="3" fill="#00a"/>
          <text x="451" y="803" fill="#0e0">Y</text><text x="415" y="868" fill="#1818d8">Z</text><text x="489" y="868" fill="#c01818">X</text>
        </g>
      </svg>
      <div class="headsup">
        <button aria-label="Zoom to fit"><svg><use href="#zoomfit"/></svg></button>
        <button aria-label="Zoom to area"><svg><use href="#zoomarea"/></svg></button>
        <button aria-label="Previous view"><svg><use href="#prev"/></svg></button>
        <button aria-label="Section view"><svg><use href="#secview"/></svg></button>
        <button aria-label="Pan"><svg><use href="#pan"/></svg></button>
        <button aria-label="Rotate"><svg><use href="#rotate"/></svg></button>
        <button aria-label="Normal to"><svg><use href="#normal"/></svg></button>
        <button class="on" aria-label="Isometric"><svg><use href="#cube"/></svg></button>
        <button aria-label="Dimetric"><svg><use href="#cubedim"/></svg></button>
        <button aria-label="Trimetric"><svg><use href="#cubetri"/></svg></button>
        <button aria-label="View orientation"><svg><use href="#orient"/></svg></button><button class="dd" aria-label="Orientation options"></button>
        <button aria-label="Display style"><svg><use href="#display"/></svg></button><button class="dd" aria-label="Display options"></button>
        <button aria-label="Hide or show items"><svg><use href="#eye"/></svg></button><button class="dd" aria-label="Visibility options"></button>
        <button aria-label="Edit appearance"><svg><use href="#appear"/></svg></button>
        <button aria-label="Apply scene"><svg><use href="#checker"/></svg></button><button class="dd" aria-label="Scene options"></button>
        <button aria-label="View settings"><svg><use href="#monitor"/></svg></button><button class="dd" aria-label="Settings options"></button>
      </div>
      <div class="doccontrols">
        <button aria-label="Dock left"><svg><use href="#dockl"/></svg></button><button aria-label="Dock right"><svg><use href="#dockr"/></svg></button><button aria-label="Minimize document"><svg><use href="#min"/></svg></button><button aria-label="Restore document"><svg><use href="#restore"/></svg></button><button aria-label="Close document"><svg><use href="#close"/></svg></button>
      </div>
      <div class="taskpane">
        <button class="on" aria-label="Resources"><svg><use href="#home"/></svg></button>
        <button aria-label="Design library"><svg class="i24"><use href="#books"/></svg></button>
        <button aria-label="File explorer"><svg><use href="#folderopen"/></svg></button>
        <button aria-label="View palette"><svg><use href="#palette"/></svg></button>
        <button aria-label="Appearances"><svg><use href="#ball"/></svg></button>
        <button aria-label="Custom properties"><svg><use href="#props"/></svg></button>
        <button aria-label="Forum"><svg><use href="#chat"/></svg></button>
      </div>
      <button class="splitter" aria-label="Collapse panel"><i class="knob"></i></button>
      <div class="viewname">*Isometric</div>
    </section>

    <aside class="tools">
      <button aria-label="Edit appearance"><svg><use href="#appear"/></svg></button>
      <button aria-label="Copy appearance"><svg><use href="#gcopy"/></svg></button>
      <button aria-label="Paste appearance"><svg><use href="#gpaste"/></svg></button>
      <button aria-label="Edit scene"><svg><use href="#scene"/></svg></button>
      <button aria-label="Edit decal"><svg><use href="#barrel"/></svg></button>
      <button class="aqua" aria-label="Target"><svg><use href="#target"/></svg></button>
      <button aria-label="Preview window"><svg><use href="#gwin"/></svg></button>
      <button aria-label="Integrated preview"><svg><use href="#gwin2"/></svg></button>
      <button aria-label="Final render"><svg><use href="#greyball"/></svg></button>
      <button aria-label="Render region"><svg><use href="#gregion"/></svg></button>
      <button aria-label="Render options"><svg><use href="#gfour"/></svg></button>
      <button aria-label="Render settings"><svg><use href="#ggear"/></svg></button>
      <button aria-label="Schedule render"><svg><use href="#gclock"/></svg></button>
      <button aria-label="Recall render"><svg><use href="#grecall"/></svg></button>
    </aside>
  </main>

  <div class="doctabs">
    <span class="stub"></span>
    <button class="nav" aria-label="First"><i class="tri left bar"></i></button><button class="nav" aria-label="Previous"><i class="tri left"></i></button><button class="nav" aria-label="Next"><i class="tri"></i></button><button class="nav" aria-label="Last"><i class="tri bar"></i></button>
    <button class="tab active">Model</button><button class="tab">Motion Study 1</button>
    <span class="edge"></span>
  </div>
  <div class="linebar">
    <div class="set">
      <button aria-label="Layer properties"><svg><use href="#stackpen"/></svg></button>
      <button aria-label="Change layer"><svg><use href="#stack"/></svg></button>
      <button aria-label="Line color"><svg><use href="#brush"/></svg></button>
      <button aria-label="Line thickness"><svg><use href="#lines"/></svg></button>
      <button aria-label="Line style"><svg><use href="#linestyle"/></svg></button>
      <button aria-label="Hide or show edges"><svg><use href="#swap"/></svg></button>
      <button aria-label="Color display mode"><svg><use href="#colorbar"/></svg></button>
    </div>
  </div>
  <footer class="status">
    <span class="grow">SOLIDWORKS Student Edition - Academic Use Only</span>
    <span class="mode">Editing Part</span>
    <button class="units">MMGS<i class="caret up"></i></button>
    <button aria-label="Tags"><svg class="i24"><use href="#tag"/></svg></button>
  </footer>
</div>
</body>
</html>
```
FILE: styles.css
```css
* { box-sizing: border-box; }
html, body { height: 100%; margin: 0; }
body { background: #494949; color: #ececec; font: 16px/22px "Open Sans", "Noto Sans", sans-serif; overflow: hidden; }
button { background: none; border: 0; margin: 0; padding: 0; color: inherit; font: inherit; display: flex; align-items: center; justify-content: center; }
svg { display: block; flex: none; }
.sprite { position: absolute; width: 0; height: 0; }
.i20 { width: 20px; height: 20px; }
.i24 { width: 24px; height: 24px; }

.app { min-height: 100vh; display: flex; flex-direction: column; border: 4px solid #0c24ff; }

/* carets */
.dd { width: 30px; align-self: stretch; }
.dd::after, .caret::after { content: ""; border: 4px solid transparent; border-top: 5px solid #f0f0f0; border-bottom: 0; display: block; }
.dd.dim::after { border-top-color: #999; }
.dd.dark::after { border-top-color: #666; }
.caret.up::after { border-top: 0; border-bottom: 4px solid #fff; }
.knob { width: 12px; height: 12px; border-radius: 50%; background: radial-gradient(circle at 45% 40%, #fff, #b0b0b0); border: 1px solid #8a8a8a; }
.tri { border: 5px solid transparent; border-left: 7px solid currentColor; border-right: 0; }
.tri.left { border-left: 0; border-right: 7px solid currentColor; }
.tri.bar { box-shadow: 2px 0 0 currentColor; }
.tri.left.bar { box-shadow: -2px 0 0 currentColor; }

/* title bar */
.titlebar { height: 54px; display: flex; align-items: center; border-top: 1px solid #808080; border-bottom: 1px solid #858585; }
.brand { display: flex; align-items: center; width: 208px; padding-left: 7px; gap: 7px; }
.ds { width: 32px; height: 34px; }
.wordmark { font: italic 300 20px/24px "Open Sans", sans-serif; color: #fff; padding-top: 2px; }
.wordmark b { font-weight: 800; }
.menu { display: flex; gap: 16px; align-items: center; padding: 4px 11px 0 8px; height: 52px; border-right: 1px solid #808080; }
.quick { display: flex; align-items: center; flex: 1; height: 48px; }
.qb { width: 32px; }
.qb svg, .selected svg { width: 28px; height: 28px; }
.qb.first { margin: 0 13px 0 37px; }
.qb.spaced { margin-left: 15px; }
.qb.white { color: #f2f2f2; }
.dd.dim { width: 24px; }
.selectbox { display: flex; align-self: stretch; border: 1px solid #141414; margin-right: 6px; }
.selected { width: 42px; background: #2b2b2b; }
.selectbox .dd { width: 18px; }
.search { display: flex; align-items: center; background: #fff; width: 302px; height: 34px; padding-left: 6px; }
.search input { flex: 1; min-width: 0; border: 0; background: none; font: 15px/20px "Open Sans", sans-serif; color: #555; padding: 0 0 0 9px; outline: 0; }
.search input::placeholder { color: #666; opacity: 1; }
.search .dd { width: 22px; }
.wincontrols { display: flex; gap: 28px; padding: 0 9px 0 17px; color: #fff; }
.wincontrols svg { width: 28px; height: 28px; }

/* ribbon */
.ribbon { display: flex; height: 117px; padding: 1px 0; border-bottom: 1px solid #808080; }
.group { display: flex; border-right: 1px solid #858585; padding: 0 6px 0 5px; }
.group.roomy { padding-right: 11px; }
.group.tight { padding-left: 0; padding-right: 8px; }
.group.bare { padding: 0 3px 0 0; }
.big { flex-direction: column; justify-content: flex-start; width: 70px; padding: 12px 0 8px; line-height: 23px; }
.big svg { width: 30px; height: 30px; margin-bottom: 2px; }
.big.more { padding-top: 5px; }
.big.wide { width: 86px; }
.big.mid { width: 60px; }
.big.narrow { width: 50px; }
.big .caret { margin-top: auto; }
.col { display: flex; flex-direction: column; padding: 0 4px; }
.col + .col { margin-left: 4px; }
.col button { height: 38px; gap: 7px; justify-content: flex-start; white-space: nowrap; padding-bottom: 1px; }
.col svg { width: 30px; height: 30px; }
.big.instant { background: #2b2b2b; border: 2px solid #0a0a0a; width: 84px; margin-left: 1px; padding-top: 10px; }

/* work area */
.work { flex: 1; min-height: 0; display: grid; grid-template: 33px minmax(0, 1fr) / 390px minmax(0, 1fr) 46px; }
.tabs { grid-area: 1 / 1 / 2 / 3; z-index: 2; justify-self: start; display: flex; border-bottom: 1px solid #808080; background: #303030; font-size: 17px; }
.tabs button { padding: 0 9px; border-left: 1px solid #808080; }
.tabs .active { background: #494949; border: 0; font-weight: 700; color: #fff; padding: 0 8px; }
.tabs button:nth-last-child(-n+3) { padding: 0 10px; }
.tabs button:last-child { padding: 0 14px; }
.panel { grid-area: 2 / 1; background: #494949; border-right: 1px solid #808080; display: flex; flex-direction: column; padding: 0 2px 3px 0; min-width: 0; border-bottom: 1px solid #707070; }
.grab { height: 32px; border: 1px solid #808080; border-top: 4px double #8fa5a5; border-width: 4px 0 1px; margin-bottom: 2px; display: flex; align-items: center; justify-content: center; flex: none; }
.ptabs { display: flex; height: 38px; border-top: 1px solid #808080; overflow: hidden; position: relative; background: #303030; flex: none; padding-left: 1px; }
.ptabs > button { width: 52px; flex: none; border-right: 1px solid #808080; border-bottom: 1px solid #808080; }
.ptabs > .active { background: #494949; border-bottom: 0; }
.ptabs svg { width: 30px; height: 30px; }
.ash { color: #8a8a8a; }
.pscroll { position: absolute; right: 0; bottom: 0; display: flex; width: 44px; height: 23px; gap: 1px; background: #999; color: #000; }
.pscroll button { flex: 1; background: #efefef; }
.pfilter { height: 38px; margin: 0 3px 0 5px; border: 1px solid #7c7c7c; background: #555; padding: 4px; flex: none; }
.pfilter svg { width: 28px; height: 28px; }
.root { display: flex; align-items: center; height: 32px; background: #0674d8; padding: 0 0 0 5px; gap: 6px; white-space: nowrap; overflow: hidden; font-size: 18px; color: #fff; margin-left: 1px; flex: none; }
.root svg { width: 28px; height: 28px; }
.tree { list-style: none; margin: 0; padding: 0; font-size: 17px; }
.tree li { display: flex; align-items: center; height: 32px; gap: 5px; padding-left: 13px; }
.tree .leaf { padding-left: 38px; }
.tree .child { padding-left: 73px; }
.tree svg { width: 29px; height: 29px; }
.tw { width: 20px; justify-content: flex-start; }
.tw::after { content: ""; border: 6px solid transparent; border-left: 6px solid #f0f0f0; border-right: 0; margin-left: 2px; }
.tw.open::after { border: 6px solid transparent; border-top: 6px solid #f0f0f0; border-bottom: 0; margin-left: 0; }
.rollback { height: 5px; background: #3490d0; border-bottom: 1px solid #1438c0; flex: none; }
.hscroll { margin: auto 0 0 1px; display: flex; height: 26px; background: #f0f0f0; border: 1px solid #fff; flex: none; }
.hscroll button { width: 25px; }
.hscroll svg { width: 14px; height: 14px; fill: none; stroke: #444; stroke-width: 2; }
.track { flex: 1; display: flex; }
.thumb { width: 70%; background: #cdcdcd; }

/* graphics area */
.viewport { grid-area: 1 / 2 / 3 / 3; position: relative; overflow: hidden; background: linear-gradient(#959595, #8b8b8b 15%, #757575 45%, #585858 80%, #4b4b4b); border-bottom: 1px solid #787878; }
.model { position: absolute; inset: 0; width: 100%; height: 100%; }
.triad { font: 12px "Open Sans", sans-serif; }
.headsup { position: absolute; top: 35px; left: 50%; transform: translateX(-50%); display: flex; height: 38px; padding-right: 8px; }
.headsup button { width: 38px; }
.headsup .dd { width: 14px; }
.headsup .dd::after { border-top-color: #6e6e6e; }
.headsup svg { width: 29px; height: 29px; }
.headsup .on { background: #666; border: 1px solid #333; }
.doccontrols { position: absolute; top: 7px; right: 10px; display: flex; gap: 10px; color: #666; }
.doccontrols svg { width: 28px; height: 28px; }
.taskpane { position: absolute; right: 0; top: 101px; width: 38px; display: flex; flex-direction: column; border-left: 1px solid #858585; }
.taskpane button { height: 36px; background: #303030; border-bottom: 1px solid #858585; }
.taskpane .on { background: #b4b4b4; }
.taskpane svg { width: 28px; height: 28px; }
.taskpane .i24 { width: 24px; height: 24px; }
.splitter { position: absolute; left: 0; top: 46%; width: 13px; height: 58px; background: #494949; border: 1px solid #808080; border-left: 0; }
.viewname { position: absolute; left: 12px; bottom: 0; font: 900 21px/22px Lato, sans-serif; color: #1e1e1e; }

/* right-hand toolbar */
.tools { grid-area: 1 / 3 / 3 / 4; border-left: 1px solid #666; padding-left: 3px; }
.tools::before { content: ""; display: block; border-top: 3px dotted #ddd; margin: 2px 0 8px 3px; }
.tools button { height: 38px; width: 100%; }
.tools::after { content: ""; display: block; border-top: 1px solid #888; margin-top: 5px; }
.tools svg { width: 30px; height: 30px; }
.aqua { color: #4288aa; }

/* bottom rows */
.doctabs { display: flex; height: 26px; padding-bottom: 1px; font-size: 18px; }
.stub { width: 27px; background: #b4b4b4; }
.nav { width: 24px; background: #aaaac2; border: 1px solid #8888a0; color: #77779a; }
.doctabs .tab { width: 170px; background: #303030; border: 1px solid #808080; border-width: 0 1px; padding-right: 12px; }
.doctabs .tab.active { width: 88px; background: none; border: 0; font-weight: 700; font-size: 17px; color: #fff; padding: 0; }
.edge { margin-left: auto; margin-right: 45px; border-right: 1px solid #9ab4b8; }
.linebar { display: flex; height: 45px; border-bottom: 1px solid #808080; padding-top: 1px; }
.set { display: flex; align-items: center; gap: 11px; border-right: 1px solid #808080; padding: 0 13px 0 12px; margin-left: 3px; border-left: 3px dotted #ddd; }
.set svg { width: 28px; height: 28px; }
.status { display: flex; align-items: center; height: 26px; font-size: 17px; line-height: 24px; padding: 3px 0 0 1px; }
.grow { flex: 1; }
.mode { width: 216px; }
.units { gap: 26px; margin-right: 32px; }
.status .i24 { margin-right: 6px; }
```
